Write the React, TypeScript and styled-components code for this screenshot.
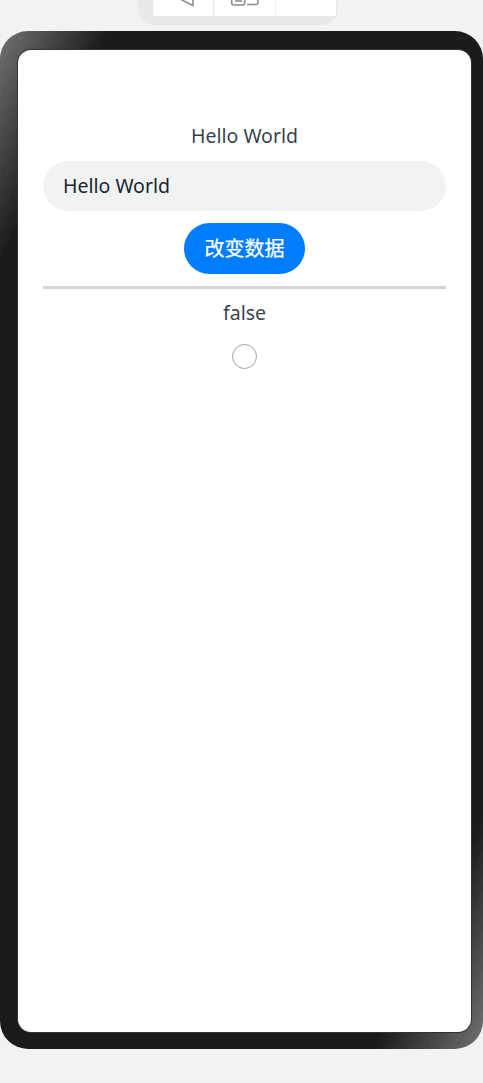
import React from "react";
import styled, { createGlobalStyle } from "styled-components";

const Global = createGlobalStyle`
  html, body { margin: 0; padding: 0; background: #f1f3f3; }
  body { width: 483px; height: 1083px; overflow: hidden; font-family: "Noto Sans", "Noto Sans CJK SC", sans-serif; }
`;

const bands = (() => {
  const hi = Array.from({ length: 17 }, (_, i) => 112 - i * 5);
  const base = 27;
  const step = 0.65;
  const grey = (v: number) => `rgb(${v},${v},${v})`;
  const stops: string[] = [];
  hi.forEach((v, i) => {
    stops.push(`${grey(v)} ${(i * step).toFixed(2)}%`, `${grey(v)} ${((i + 1) * step).toFixed(2)}%`);
  });
  stops.push(`${grey(base)} ${(hi.length * step).toFixed(2)}%`, `${grey(base)} ${(100 - hi.length * step).toFixed(2)}%`);
  [...hi].reverse().forEach((v, i) => {
    const s = 100 - (hi.length - i) * step;
    stops.push(`${grey(v)} ${s.toFixed(2)}%`, `${grey(v)} ${(s + step).toFixed(2)}%`);
  });
  return `linear-gradient(115deg, ${stops.join(", ")})`;
})();

const Page = styled.div`
  display: flex;
  flex-direction: column;
  align-items: flex-start;
  width: 483px;
  height: 1083px;
`;

const Toolbar = styled.div`
  display: flex;
  align-items: flex-end;
  box-sizing: border-box;
  width: 200px;
  height: 25px;
  margin-left: 138px;
  padding: 0 2px 9px 15px;
  background: #e9e9e9;
  border-radius: 0 0 16px 16px;
`;

const ToolButton = styled.div<{ $width: number; $divider: number }>`
  display: flex;
  align-items: flex-start;
  justify-content: flex-start;
  box-sizing: border-box;
  width: ${(p) => p.$width}px;
  height: 16px;
  background: #fff;
  border-right: ${(p) => p.$divider}px solid #efefef;
  overflow: hidden;
`;

const Device = styled.div`
  box-sizing: border-box;
  width: 483px;
  height: 1018px;
  margin-top: 6px;
  padding: 19px 12px 17px 18px;
  border-radius: 28px;
  background: ${bands};
`;

const Screen = styled.main`
  display: flex;
  flex-direction: column;
  align-items: center;
  box-sizing: border-box;
  height: 100%;
  padding: 72px 25px 0;
  background: #fff;
  border-radius: 13px;
  box-shadow: 0 0 0 1px #333;
`;

const Label = styled.div`
  height: 27px;
  line-height: 27px;
  font-size: 19.5px;
  color: rgba(24, 36, 49, 0.88);
`;

const Field = styled.div`
  box-sizing: border-box;
  align-self: stretch;
  height: 50px;
  margin-top: 12px;
  padding-left: 20px;
  line-height: 50px;
  font-size: 19.5px;
  color: #182431;
  background: #f1f3f3;
  border-radius: 25px;
`;

const Action = styled.button`
  width: 121px;
  height: 51px;
  margin-top: 12px;
  padding: 0 0 3px;
  border: none;
  border-radius: 26px;
  background: #007dff;
  color: #fff;
  font-family: "Noto Sans CJK SC", sans-serif;
  font-size: 20px;
  font-weight: 400;
  -webkit-text-stroke: 0.25px #fff;
`;

const Rule = styled.hr`
  align-self: stretch;
  height: 3px;
  margin: 12px 0 0;
  border: none;
  background: #d4d4d6;
`;

const Flag = styled(Label)`
  margin-top: 10px;
`;

const Radio = styled.div`
  box-sizing: border-box;
  width: 25px;
  height: 25px;
  margin-top: 18px;
  border: 1.4px solid #a2a2a6;
  border-radius: 50%;
  background: #fff;
`;

export default function App() {
  return (
    <Page>
      <Global />
      <Toolbar>
        <ToolButton $width={62} $divider={2}>
          <svg width="45" height="8" viewBox="0 0 45 8" fill="none" stroke="#8a8a8a" strokeWidth="1.5">
            <path d="M27 -1 L40 5.5 V-3" />
          </svg>
        </ToolButton>
        <ToolButton $width={61} $divider={1}>
          <svg width="48" height="8" viewBox="0 0 48 8" fill="none" stroke="#8a8a8a" strokeWidth="1.5">
            <path d="M16.7-2V3a2 2 0 0 0 2 2h9a2 2 0 0 0 2-2V-2" />
            <path d="M20 1h7" />
            <path d="M32 4.5h9a2 2 0 0 0 2-2V-2" />
          </svg>
        </ToolButton>
        <ToolButton $width={60} $divider={0} />
      </Toolbar>
      <Device>
        <Screen>
          <Label>Hello World</Label>
          <Field>Hello World</Field>
          <Action>改变数据</Action>
          <Rule />
          <Flag>false</Flag>
          <Radio />
        </Screen>
      </Device>
    </Page>
  );
}
